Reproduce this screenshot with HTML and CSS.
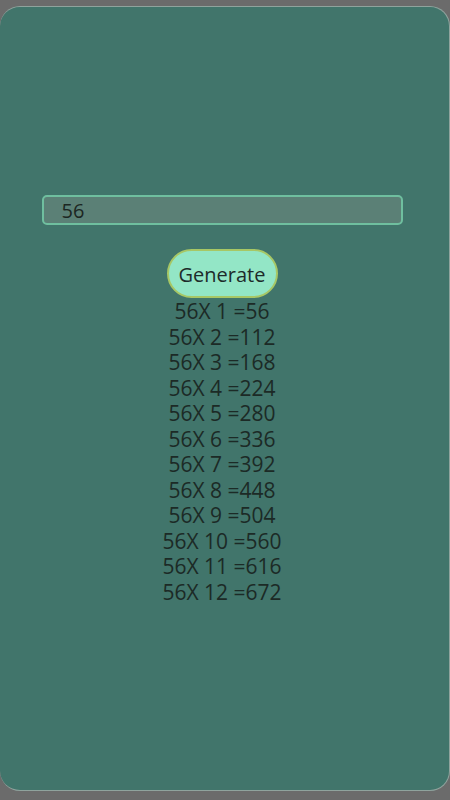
FILE: index.html
```html
<!DOCTYPE html>
<html>
<head>
<meta charset="utf-8">
<link rel="stylesheet" href="styles.css">
</head>
<body>
<div class="card">
  <div class="content">
    <input class="num" type="text" value="56">
    <button class="gen">Generate</button>
    <div class="table">
      <div>56X 1 =56</div>
      <div>56X 2 =112</div>
      <div>56X 3 =168</div>
      <div>56X 4 =224</div>
      <div>56X 5 =280</div>
      <div>56X 6 =336</div>
      <div>56X 7 =392</div>
      <div>56X 8 =448</div>
      <div>56X 9 =504</div>
      <div>56X 10 =560</div>
      <div>56X 11 =616</div>
      <div>56X 12 =672</div>
    </div>
  </div>
</div>
</body>
</html>
```

FILE: styles.css
```css
html, body {
  margin: 0;
  padding: 0;
  background: #6b6b6b;
  height: 800px;
  overflow: hidden;
}
body {
  padding-top: 6px;
  font-family: "Open Sans", "Noto Sans", sans-serif;
}
.card {
  box-sizing: border-box;
  width: 450px;
  height: 785px;
  background: #41756b;
  border-radius: 20px;
  border: 1px solid #8fa39d;
  border-left: none;
}
.content {
  display: flex;
  flex-direction: column;
  align-items: center;
  padding-top: 188px;
  padding-right: 5px;
}
.num {
  box-sizing: border-box;
  width: 361px;
  height: 30px;
  background: #5b8076;
  border: 2px solid #6fbf9f;
  border-radius: 5px;
  padding: 0 0 0 18px;
  font-family: inherit;
  font-size: 20px;
  color: #1c2622;
  outline: none;
}
.gen {
  box-sizing: border-box;
  margin-top: 24px;
  width: 111px;
  height: 49px;
  border-radius: 25px;
  background: #93e6c6;
  border: 2px solid #a7c765;
  font-family: inherit;
  font-size: 20px;
  color: #1d2b2a;
  padding: 0;
  padding-top: 2px;
}
.table {
  text-align: center;
  font-size: 21px;
  line-height: 25.5px;
  color: #1c2a26;
  margin-top: 1px;
}
```
